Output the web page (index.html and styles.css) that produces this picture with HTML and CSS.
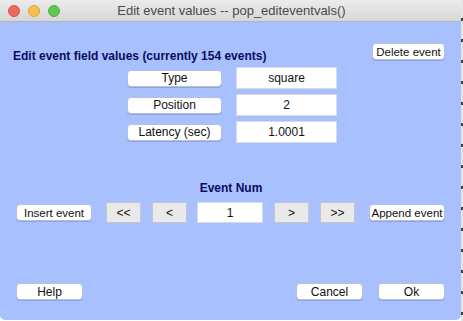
FILE: index.html
```html
<!DOCTYPE html>
<html lang="en">
<head>
    <meta charset="UTF-8">
    <title>Edit event values -- pop_editeventvals()</title>
    <link rel="stylesheet" href="styles.css">
</head>
<body>
    <div class="window">
        <div class="titlebar">
            <div class="lights">
                <span class="light red"></span>
                <span class="light yellow"></span>
                <span class="light green"></span>
            </div>
            <div class="title">Edit event values -- pop_editeventvals()</div>
        </div>

        <div class="content">
            <div class="header-row">
                <h1>Edit event field values (currently 154 events)</h1>
                <button class="button delete">Delete event</button>
            </div>

            <div class="fields">
                <button class="button field-label">Type</button>
                <div class="value-box">square</div>
                <button class="button field-label">Position</button>
                <div class="value-box">2</div>
                <button class="button field-label">Latency (sec)</button>
                <div class="value-box">1.0001</div>
            </div>

            <div class="event-num">Event Num</div>

            <div class="nav-row">
                <button class="button wide">Insert event</button>
                <button class="nav-button first">&lt;&lt;</button>
                <button class="nav-button">&lt;</button>
                <div class="value-box num-box">1</div>
                <button class="nav-button">&gt;</button>
                <button class="nav-button">&gt;&gt;</button>
                <button class="button wide last">Append event</button>
            </div>

            <div class="footer-row">
                <button class="button footer-button">Help</button>
                <button class="button footer-button push">Cancel</button>
                <button class="button footer-button">Ok</button>
            </div>
        </div>
    </div>
    <div class="edge"></div>
</body>
</html>
```

FILE: styles.css
```css
* {
    margin: 0;
    padding: 0;
    box-sizing: border-box;
    font-family: "Liberation Sans", Arial, sans-serif;
}

body {
    background-color: #ffffff;
    display: flex;
    width: 463px;
    height: 321px;
    overflow: hidden;
}

.window {
    width: 461px;
    height: 320px;
    background-color: #a8c1fe;
    border-radius: 0 0 5px 5px;
    overflow: hidden;
}

.edge {
    width: 2px;
    height: 321px;
    background: repeating-linear-gradient(to bottom, #e4e4e4 0, #e4e4e4 18px, #3c3c3c 18px, #3c3c3c 21px);
}

/* title bar */
.titlebar {
    height: 22px;
    display: flex;
    align-items: center;
    background: linear-gradient(to bottom, #ececec, #d6d6d6);
    border-bottom: 1px solid #b4b4b4;
}

.lights {
    display: flex;
    gap: 8px;
    padding-left: 8px;
}

.light {
    width: 12px;
    height: 12px;
    border-radius: 50%;
}

.red {
    background-color: #ee6a5f;
    border: 1px solid #d8564b;
}

.yellow {
    background-color: #f6bf4f;
    border: 1px solid #dea33a;
}

.green {
    background-color: #61c654;
    border: 1px solid #4eae42;
}

.title {
    flex: 1;
    text-align: center;
    font-size: 13px;
    color: #4a4a4a;
    padding-right: 68px;
    padding-left: 10px;
}

/* dialog body */
.content {
    padding: 0 16px;
}

.header-row {
    display: flex;
    justify-content: space-between;
    align-items: flex-start;
    margin-top: 21px;
}

h1 {
    margin-top: 6px;
    margin-left: -3px;
    font-size: 12px;
    line-height: 14px;
    font-weight: bold;
    color: #0b0b62;
}

.button {
    height: 17px;
    background-color: #ffffff;
    border: 1px solid #b4c0dc;
    border-radius: 4px;
    font-size: 12px;
    color: #111111;
    padding: 0;
    white-space: nowrap;
    box-shadow: 0 1px 0 rgba(60, 80, 140, 0.25);
}

.delete {
    width: 73px;
    font-size: 11.5px;
}

.fields {
    display: grid;
    grid-template-columns: 95px 101px;
    grid-auto-rows: 22px;
    column-gap: 14px;
    row-gap: 5px;
    align-items: center;
    margin-top: 4px;
    margin-left: 111px;
}

.value-box {
    height: 22px;
    background-color: #ffffff;
    border: 1px solid #d6dbe6;
    font-size: 12px;
    line-height: 20px;
    text-align: center;
    color: #111111;
}

.event-num {
    margin-top: 38px;
    text-align: center;
    font-size: 12px;
    line-height: 14px;
    font-weight: bold;
    color: #0b0b62;
    padding-left: 1px;
}

.nav-row {
    display: flex;
    align-items: center;
    height: 21px;
    margin-top: 7px;
    gap: 11px;
}

.wide {
    width: 76px;
    font-size: 11.5px;
}

.nav-button {
    width: 35px;
    height: 21px;
    background-color: #e9e9e9;
    border: 1px solid #c6c6c6;
    font-size: 12px;
    color: #111111;
}

.nav-button.first {
    margin-left: 3px;
}

.num-box {
    width: 66px;
    height: 21px;
    margin-left: -1px;
}

.wide.last {
    margin-left: 3px;
}

.footer-row {
    display: flex;
    gap: 15px;
    margin-top: 60px;
}

.footer-button {
    width: 67px;
}

.push {
    margin-left: auto;
}
```
